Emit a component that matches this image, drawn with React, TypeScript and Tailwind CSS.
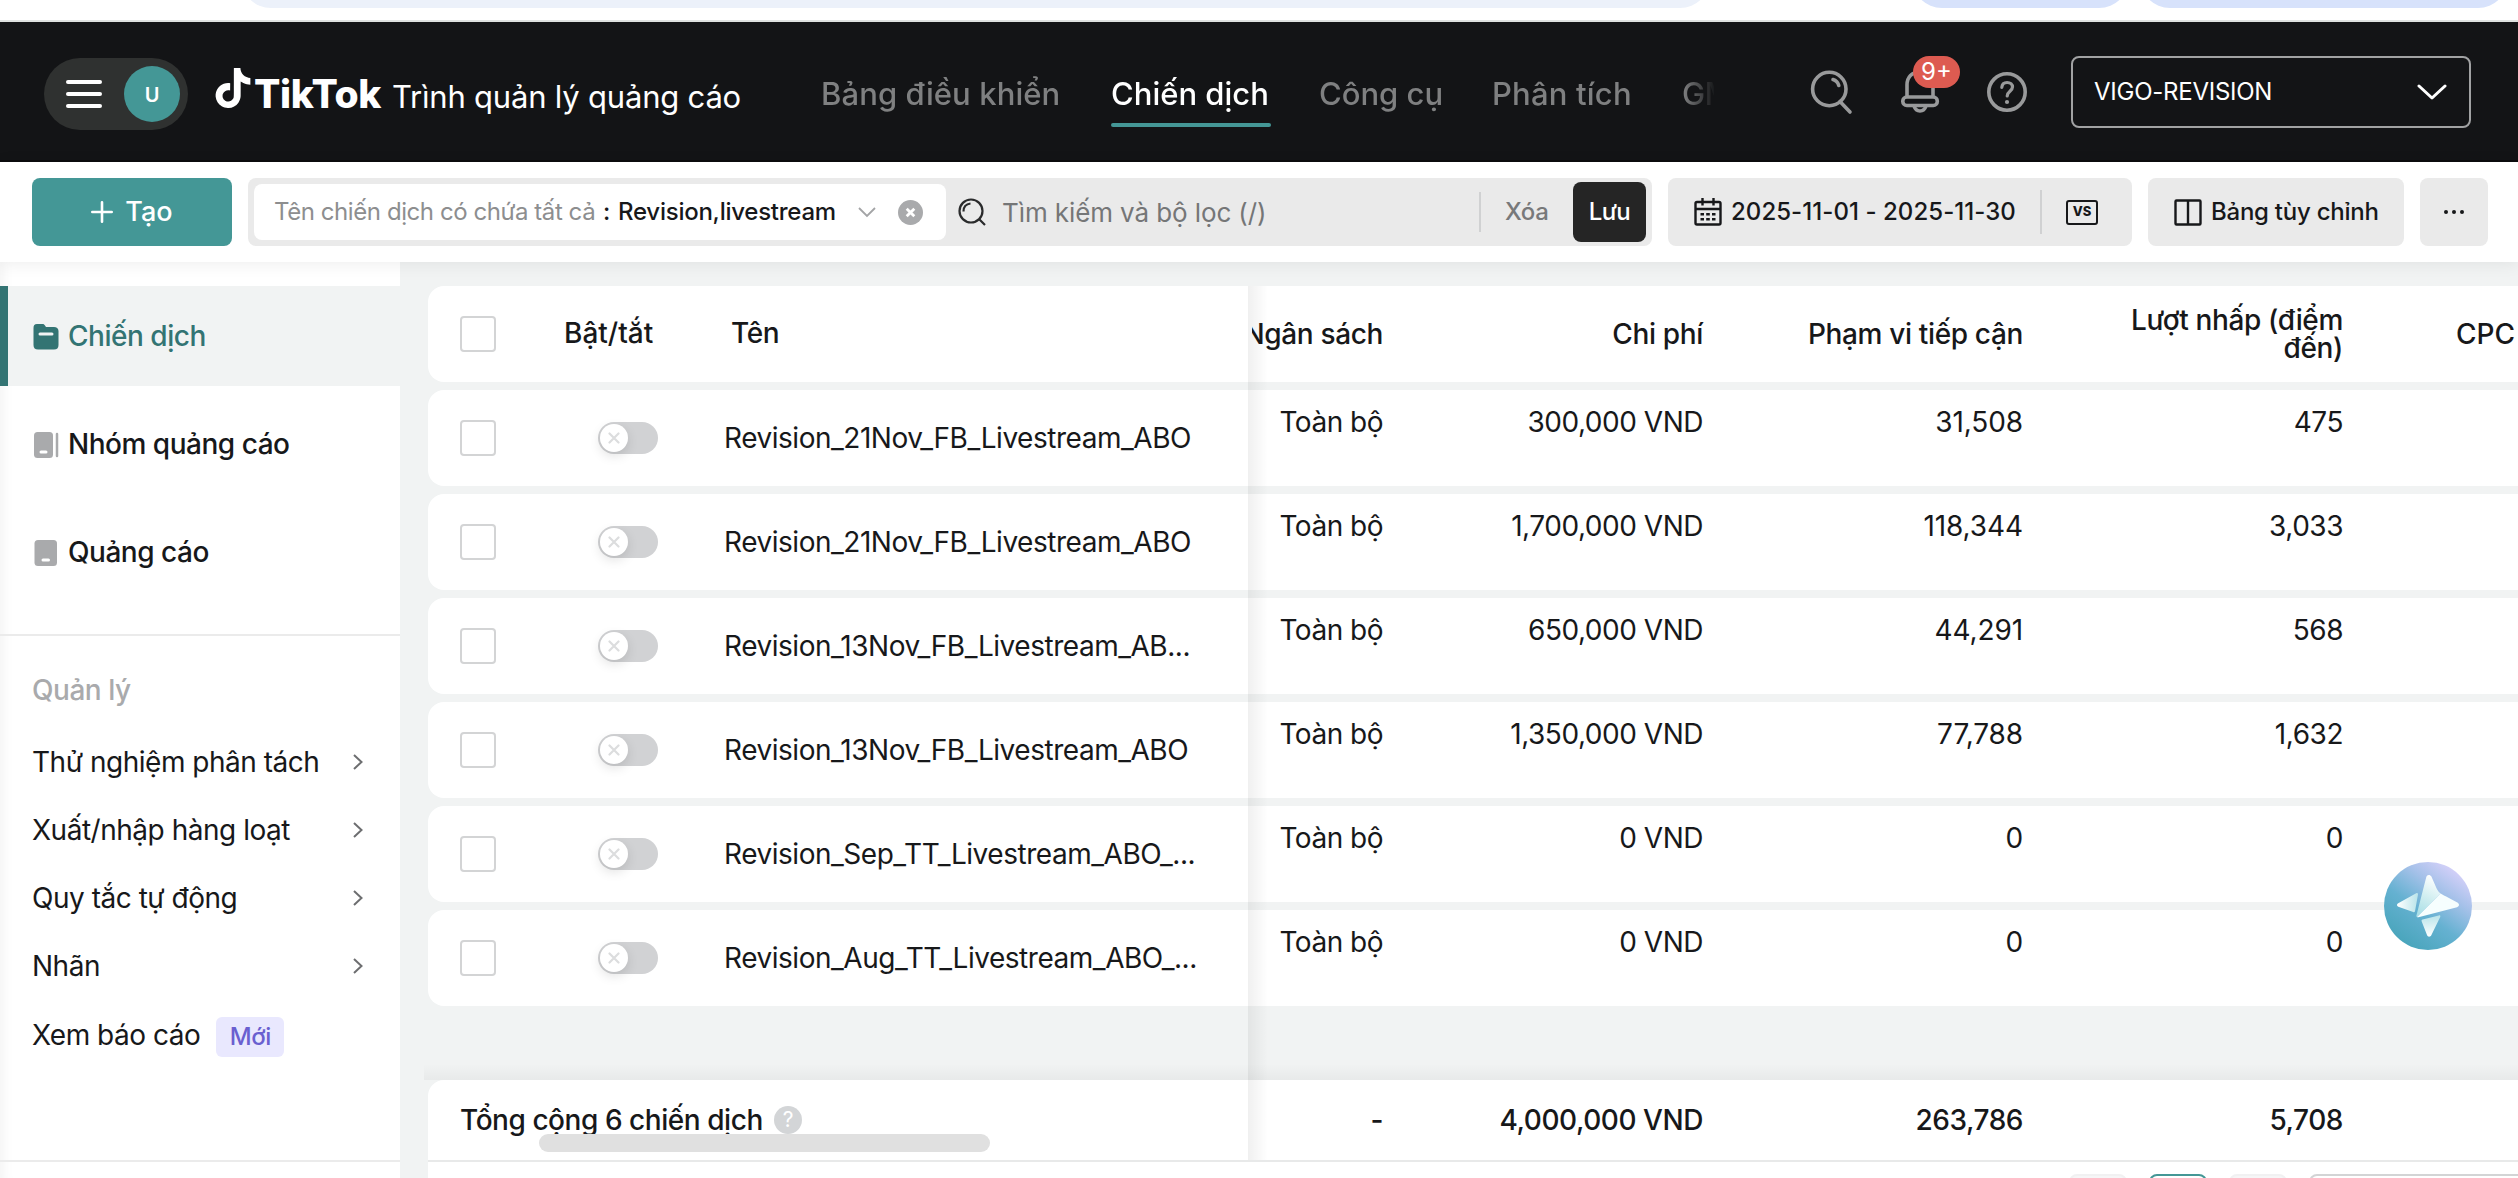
import type { ReactNode } from "react";
import { SiTiktok } from "react-icons/si";

const campaigns = [
  { name: "Revision_21Nov_FB_Livestream_ABO", cost: "300,000 VND", reach: "31,508", clicks: "475" },
  { name: "Revision_21Nov_FB_Livestream_ABO", cost: "1,700,000 VND", reach: "118,344", clicks: "3,033" },
  { name: "Revision_13Nov_FB_Livestream_AB...", cost: "650,000 VND", reach: "44,291", clicks: "568" },
  { name: "Revision_13Nov_FB_Livestream_ABO", cost: "1,350,000 VND", reach: "77,788", clicks: "1,632" },
  { name: "Revision_Sep_TT_Livestream_ABO_...", cost: "0 VND", reach: "0", clicks: "0" },
  { name: "Revision_Aug_TT_Livestream_ABO_...", cost: "0 VND", reach: "0", clicks: "0" },
];

const tools = ["Thử nghiệm phân tách", "Xuất/nhập hàng loạt", "Quy tắc tự động", "Nhãn"];

function BrowserEdge() {
  return (
    <div className="h-[22px] shrink-0 border-b-2 border-[#dfe2e0] bg-white">
      <div className="flex h-2 items-end overflow-hidden pl-[241px]">
        <div className="h-[60px] w-[1469px] shrink-0 rounded-full bg-[#ecf1fa]" />
        <div className="ml-[202px] h-[60px] w-[217px] shrink-0 rounded-full bg-[#d7e2fb]" />
        <div className="ml-[11px] h-[60px] w-[368px] shrink-0 rounded-full bg-[#d7e2fb]" />
      </div>
    </div>
  );
}

function Header() {
  return (
    <header className="flex h-[140px] shrink-0 items-center border-b-2 border-[#0c0c0e] bg-[#131416] pt-0.5 pl-11">
      <div className="mt-1 flex h-[72px] w-36 shrink-0 items-center justify-between rounded-full bg-[#2f3130] pr-2 pl-[22px]">
        <div className="flex flex-col gap-2">
          <span className="h-1 w-9 rounded-sm bg-white" />
          <span className="h-1 w-9 rounded-sm bg-white" />
          <span className="h-1 w-9 rounded-sm bg-white" />
        </div>
        <div className="flex size-14 items-center justify-center rounded-full bg-[#449796] pt-0.5 text-[20px] font-semibold text-white">U</div>
      </div>
      <SiTiktok className="-mt-2 ml-[25px] shrink-0 text-white" size={40} />
      <span className="mt-[3px] ml-[1px] w-[126px] shrink-0 text-[39px] leading-[48px] font-extrabold tracking-[-0.3px] whitespace-nowrap text-white">TikTok</span>
      <span className="mt-[9px] ml-[12px] w-[348px] shrink-0 text-[31px] leading-10 tracking-[-0.2px] whitespace-nowrap text-white">Trình quản lý quảng cáo</span>
      <nav className="ml-[81px] flex h-[136px] w-[893px] shrink-0 items-center gap-12 overflow-hidden pt-[3px] text-[31px] leading-10 font-[550] whitespace-nowrap text-[#7f8081] [mask-image:linear-gradient(to_right,#000_862px,transparent_895px)]">
        <span className="w-[242px] shrink-0 tracking-[0.1px]">Bảng điều khiển</span>
        <span className="relative w-40 shrink-0 text-white">
          Chiến dịch
          <span className="absolute inset-x-0 top-[49px] h-1 rounded-sm bg-[#449796]" />
        </span>
        <span className="w-[125px] shrink-0">Công cụ</span>
        <span className="w-[142px] shrink-0 tracking-[0.2px]">Phân tích</span>
        <span className="shrink-0 tracking-[-0.5px]">GMV Max</span>
      </nav>
      <svg className="ml-[95px] h-12 w-12 shrink-0" viewBox="0 0 48 48" fill="none" stroke="#999a9b" strokeWidth="3.6">
        <circle cx="20.3" cy="21" r="16.7" />
        <path d="M31 33.5 41 44" strokeLinecap="round" />
        <path d="M24 11.5c3 .9 5 3 5.8 6" strokeLinecap="round" />
      </svg>
      <div className="relative -mt-1.5 ml-[43px] shrink-0">
        <svg className="block h-[56px] w-[40px]" viewBox="0 0 40 56" fill="none" stroke="#999a9b" strokeWidth="3.6" strokeLinejoin="round">
          <path d="M7 36V24C7 16 12 11 19.700 11S33 16 33 24v12" />
          <rect x="2.800" y="36" width="34.500" height="8.500" rx="4" />
          <path d="M14 45c1 3 3 5 6 5s5-2 6-5" />
        </svg>
        <span className="absolute top-[-5px] left-[13px] flex h-8 w-[47px] items-center justify-center rounded-full bg-[#dd5b51] text-[24px] text-white">9+</span>
      </div>
      <svg className="ml-[47px] h-10 w-10 shrink-0" viewBox="0 0 40 40" fill="none" stroke="#999a9b" strokeWidth="3.6">
        <circle cx="20" cy="20" r="18.200" />
        <path d="M14.800 15.300c.3-3 2.300-4.800 5.300-4.800 3.200 0 5.400 1.900 5.400 4.600 0 4.100-5.300 4.300-5.300 8.900" strokeLinecap="round" strokeWidth="3.200" />
        <circle cx="20" cy="30" r="2.100" fill="#999a9b" stroke="none" />
      </svg>
      <div className="ml-[44px] flex h-[72px] w-[400px] shrink-0 items-center justify-between rounded-lg border-2 border-[#a1a2a3] pr-[22px] pl-[21px] text-[24px] tracking-[-0.25px] text-white">
        <span>VIGO-REVISION</span>
        <svg className="h-4 w-[30px]" viewBox="0 0 30 16" fill="none" stroke="#fff" strokeWidth="3" strokeLinecap="round" strokeLinejoin="round">
          <path d="m2 2 13 12L28 2" />
        </svg>
      </div>
    </header>
  );
}

function Toolbar() {
  return (
    <div className="relative z-10 flex h-[100px] shrink-0 items-center gap-4 bg-white pl-8 text-[24px] text-[#17181a] shadow-[0_2px_16px_rgba(0,0,0,0.07)]">
      <button className="flex h-[68px] w-[200px] items-center justify-center gap-3 rounded-lg bg-[#449796] text-[27px] font-medium text-white">
        <svg className="size-[22px]" viewBox="0 0 22 22" stroke="#fff" strokeWidth="2.600" strokeLinecap="round">
          <path d="M11 1.300v19.400M1.300 11h19.400" />
        </svg>
        Tạo
      </button>
      <div className="flex h-[68px] w-[1404px] shrink-0 items-center rounded-lg bg-[#eaeaea] pl-1.5 whitespace-nowrap">
        <div className="flex h-14 w-[692px] items-center rounded-lg bg-white pl-5">
          <span className="w-[329px] tracking-[-0.43px] text-[#8d8e8f]">Tên chiến dịch có chứa tất cả</span>
          <span className="w-[15px] font-medium">:</span>
          <span className="w-[240px] font-[550] tracking-[-0.25px]">Revision,livestream</span>
          <svg className="h-3 w-[18px]" viewBox="0 0 18 12" fill="none" stroke="#a3a4a6" strokeWidth="1.800">
            <path d="m1 2 8 8 8-8" />
          </svg>
          <svg className="ml-[22px] size-[25px]" viewBox="0 0 25 25">
            <circle cx="12.500" cy="12.500" r="12.500" fill="#a9aaac" />
            <path d="m8.700 8.700 7.600 7.600M16.300 8.700l-7.600 7.600" stroke="#fff" strokeWidth="2.800" />
          </svg>
        </div>
        <svg className="ml-[12px] size-7" viewBox="0 0 28 28" fill="none" stroke="#2a2b2c" strokeWidth="2.200">
          <circle cx="13" cy="13" r="11.500" />
          <path d="m21 21 6 6M5.500 13.500c0-4.500 2.500-7.500 7-8" />
        </svg>
        <span className="ml-[16px] w-[477px] text-[26px] tracking-[-0.1px] text-[#757677]">Tìm kiếm và bộ lọc (/)</span>
        <span className="h-10 w-0.5 bg-[#d0d1d2]" />
        <span className="ml-[24px] w-[68px] font-medium tracking-[-0.3px] text-[#78797a]">Xóa</span>
        <button className="flex h-[60px] w-[73px] items-center justify-center rounded-lg bg-[#252525] font-medium tracking-[-0.6px] text-white">Lưu</button>
      </div>
      <div className="flex h-[68px] w-[464px] shrink-0 items-center rounded-lg bg-[#eaeaea] pl-[26px] font-medium">
        <svg className="size-7" viewBox="0 0 28 28" fill="none" stroke="#17181a" strokeWidth="2.400">
          <rect x="1.500" y="4" width="25" height="22.500" rx="1.500" />
          <path d="M1.500 11h25M8.500 0v7.500M19.500 0v7.500" />
          <path d="M6.500 16.300h3.500M12.200 16.300h3.600M18 16.300h3.500M6.500 21.300h3.500M12.200 21.300h3.600M18 21.300h3.500" />
        </svg>
        <span className="ml-[9px] w-[309px] tracking-[0.05px] whitespace-nowrap">2025-11-01 - 2025-11-30</span>
        <span className="h-11 w-0.5 bg-[#d0d1d2]" />
        <span className="ml-[24px] flex h-[25px] w-8 items-center justify-center rounded-[3px] border-[2.500px] border-[#17181a] text-[13px] font-extrabold">VS</span>
      </div>
      <div className="flex h-[68px] w-64 shrink-0 items-center rounded-lg bg-[#eaeaea] pl-[26px] font-[550] tracking-[-0.25px]">
        <svg className="h-[27px] w-7" viewBox="0 0 28 27" fill="none" stroke="#17181a" strokeWidth="2.400">
          <rect x="1.500" y="1.500" width="25" height="24" rx="1" />
          <path d="M14 1.500v24" />
        </svg>
        <span className="ml-[9px] whitespace-nowrap">Bảng tùy chỉnh</span>
      </div>
      <div className="flex h-[68px] w-[68px] shrink-0 items-center justify-center gap-1 rounded-lg bg-[#eaeaea]">
        <span className="size-1 rounded-full bg-[#17181a]" />
        <span className="size-1 rounded-full bg-[#17181a]" />
        <span className="size-1 rounded-full bg-[#17181a]" />
      </div>
    </div>
  );
}

function LevelItem({ label, active, children }: { label: string; active?: boolean; children: ReactNode }) {
  return (
    <div className={active ? "flex h-[100px] items-center border-l-8 border-[#337473] bg-[#f1f3f3] pl-6 text-[#337473]" : "flex h-[100px] items-center border-l-8 border-transparent pl-6"}>
      <svg className="mt-0.5 h-7 w-7" viewBox="0 0 28 28">{children}</svg>
      <span className="ml-[8px] font-[550]">{label}</span>
    </div>
  );
}

function Sidebar() {
  return (
    <aside className="flex w-[400px] shrink-0 flex-col bg-white pt-6 text-[28px] leading-8 tracking-[-0.48px] text-[#17181a] shadow-[inset_14px_0_14px_-12px_rgba(0,0,0,0.06)]">
      <div className="flex flex-col gap-2 border-b-2 border-[#ebebeb] pb-8">
        <LevelItem label="Chiến dịch" active>
          <path fill="#337473" d="M5 1h5.500c1 0 1.700.5 2.300 1.300L14 4h8c2.500 0 4.500 1.500 4.500 4v14c0 3-1.500 4.500-4.500 4.500H6C3 26.500 1.500 25 1.500 22V5c0-2.500 1-4 3.500-4Z" />
          <path stroke="#f1f3f3" strokeWidth="3" strokeLinecap="round" d="M8 11h12" />
        </LevelItem>
        <LevelItem label="Nhóm quảng cáo">
          <rect x="2" y="1" width="19" height="26" rx="3.500" fill="#a9aaac" />
          <path stroke="#fff" strokeWidth="3" strokeLinecap="round" d="M9 21h5" />
          <path stroke="#a9aaac" strokeWidth="2.500" strokeLinecap="round" d="M25 3v22" />
        </LevelItem>
        <LevelItem label="Quảng cáo">
          <rect x="2.500" y="1" width="22.500" height="26" rx="3.500" fill="#a9aaac" />
          <path stroke="#fff" strokeWidth="3" strokeLinecap="round" d="M11 21h5.500" />
        </LevelItem>
      </div>
      <div className="flex h-[526px] flex-col border-b-2 border-[#ebebeb] pt-[38px] pl-8">
        <div className="mb-[22px] font-medium text-[#a9aaac]">Quản lý</div>
        {tools.map((tool) => (
          <div key={tool} className="flex h-[68px] items-center justify-between pr-9">
            <span className="whitespace-nowrap">{tool}</span>
            <svg className="h-[18px] w-3" viewBox="0 0 12 18" fill="none" stroke="#6d6e70" strokeWidth="2">
              <path d="m2 2 7.500 7L2 16" />
            </svg>
          </div>
        ))}
        <div className="flex h-[72px] items-center pb-0.5">
          <span>Xem báo cáo</span>
          <span className="mt-1 ml-4 flex h-10 w-[68px] items-center justify-center rounded-md bg-[#e9e8fe] text-[24px] font-[550] text-[#6a5fd0]">Mới</span>
        </div>
      </div>
    </aside>
  );
}

function Checkbox() {
  return <span className="block size-9 shrink-0 rounded border-2 border-[#d3d4d5] bg-white" />;
}

function Toggle() {
  return (
    <span className="flex h-8 w-[60px] shrink-0 items-center rounded-full bg-[#d1d2d4] pl-0.5">
      <span className="flex size-7 items-center justify-center rounded-full bg-white shadow-[0_4px_12px_rgba(0,0,0,0.12)]">
        <svg className="size-3" viewBox="0 0 12 12" stroke="#dcddde" strokeWidth="2.200" strokeLinecap="round">
          <path d="m1.500 1.500 9 9M10.500 1.500l-9 9" />
        </svg>
      </span>
    </span>
  );
}

function Main() {
  return (
    <main className="relative flex flex-1 flex-col overflow-hidden bg-[#f1f3f3] pt-6 pl-7 text-[28px] leading-7 tracking-[-0.47px] text-[#17181a]">
      <div className="flex flex-col gap-2">
        <div className="flex h-24 items-center rounded-l-2xl bg-white font-[550] tracking-[-0.35px] whitespace-nowrap">
          <div className="flex w-[824px] shrink-0 items-center pl-8">
            <Checkbox />
            <span className="-mt-0.5 ml-[68px] w-[167px] tracking-[0px]">Bật/tắt</span>
            <span className="-mt-0.5">Tên</span>
          </div>
          <div className="flex w-[151px] shrink-0 justify-end overflow-hidden py-2 pr-5">Ngân sách</div>
          <div className="w-80 shrink-0 pr-5 text-right">Chi phí</div>
          <div className="w-80 shrink-0 pr-5 text-right">Phạm vi tiếp cận</div>
          <div className="w-80 shrink-0 pr-5 text-right">Lượt nhấp (điểm<br />đến)</div>
          <div className="pl-[93px] tracking-[0px]">CPC</div>
        </div>
        {campaigns.map((c, i) => (
          <div key={i} className="flex h-24 rounded-l-2xl bg-white whitespace-nowrap">
            <div className="flex w-[820px] shrink-0 items-center pl-8">
              <Checkbox />
              <span className="ml-[102px]"><Toggle /></span>
              <span className="-mt-px ml-[66px]">{c.name}</span>
            </div>
            <div className="w-[155px] pt-[18px] pr-5 text-right tracking-[-0.5px]">Toàn bộ</div>
            <div className="w-80 pt-[18px] pr-5 text-right">{c.cost}</div>
            <div className="w-80 pt-[18px] pr-5 text-right tracking-[-0.1px]">{c.reach}</div>
            <div className="w-80 pt-[18px] pr-5 text-right">{c.clicks}</div>
          </div>
        ))}
      </div>
      <div className="mt-[58px] -ml-1 h-4 shrink-0 bg-gradient-to-b from-transparent to-black/4" />
      <div className="flex h-[82px] shrink-0 items-center rounded-tl-2xl border-b-2 border-[#e8e9e9] bg-white font-[550] tracking-[-0.45px] whitespace-nowrap">
        <div className="relative flex w-[820px] shrink-0 items-center pl-8">
          <span>Tổng cộng 6 chiến dịch</span>
          <span className="ml-[11px] flex size-7 items-center justify-center rounded-full bg-[#d3d5d7] text-[21px] font-normal text-white">?</span>
          <span className="absolute top-[28px] left-[111px] h-[18px] w-[451px] rounded-full bg-[#e0e0e0]" />
        </div>
        <div className="w-[155px] pr-5 text-right">-</div>
        <div className="w-80 pr-5 text-right">4,000,000 VND</div>
        <div className="w-80 pr-5 text-right">263,786</div>
        <div className="w-80 pr-5 text-right">5,708</div>
      </div>
      <div className="flex flex-1 items-start gap-[22px] overflow-hidden bg-white pt-3 pl-[1641px]">
        <span className="h-14 w-[58px] shrink-0 rounded-lg border-2 border-[#f1f1f2] bg-[#f6f6f7]" />
        <span className="h-14 w-[58px] shrink-0 rounded-lg border-2 border-[#449796]" />
        <span className="h-14 w-[58px] shrink-0 rounded-lg border-2 border-[#f1f1f2] bg-[#f6f6f7]" />
        <span className="h-14 w-[280px] shrink-0 rounded-lg border-2 border-[#d3d4d5]" />
      </div>
      <div className="pointer-events-none absolute top-6 left-[848px] h-[874px] w-5 bg-gradient-to-r from-black/6 to-transparent" />
      <svg className="absolute top-[600px] right-[46px] size-[88px]" viewBox="0 0 88 88">
        <defs>
          <linearGradient id="orb" x1="0.200" y1="0.950" x2="0.850" y2="0.050">
            <stop offset="0" stopColor="#47a4ba" />
            <stop offset="0.400" stopColor="#65b1d1" />
            <stop offset="0.700" stopColor="#a5c1e9" />
            <stop offset="1" stopColor="#ddd3fc" />
          </linearGradient>
          <linearGradient id="wing" x1="0.600" y1="0" x2="0.300" y2="1">
            <stop offset="0" stopColor="#fff" />
            <stop offset="0.500" stopColor="#d3eff1" />
            <stop offset="1" stopColor="#a9dfe6" />
          </linearGradient>
          <linearGradient id="tailLeft" x1="0" y1="0" x2="1" y2="0">
            <stop offset="0" stopColor="#fff" />
            <stop offset="1" stopColor="#b9e4ea" />
          </linearGradient>
          <linearGradient id="tailDown" x1="0" y1="1" x2="0" y2="0">
            <stop offset="0" stopColor="#fff" />
            <stop offset="1" stopColor="#b9e4ea" />
          </linearGradient>
        </defs>
        <circle cx="44" cy="44" r="44" fill="url(#orb)" />
        <path fill="url(#wing)" d="M42.300 15c.6-2.700 4-2.800 5.100-.4l5 11.400c1.200 2.700 2.400 4.300 4.300 5.500L33 55c-.7-.2-.7-1-.5-1.800Z" />
        <path fill="#f6fefe" d="M56.700 31.500c1.400 1.200 3.500 2.100 5 2.800L73.300 40.500c2.400 1.200 2.200 4-.3 4.700L34.500 55.200c-.8.2-1.500 0-1.500-.3Z" />
        <path fill="url(#tailLeft)" d="M14.200 41.200 32.200 31.300c1-.6 2 .1 1.800 1.200L31 49.200c-.2 1-.9 1.300-1.800.9L14.300 44.700c-1.700-.7-1.700-2.600-.1-3.500Z" />
        <path fill="url(#tailDown)" d="m38.600 57.400 16.200-4c1.200-.3 1.900.4 1.400 1.500l-8.900 18.400c-1.100 2-3.500 1.900-4.300-.2l-5.300-13.600c-.4-1.100-.1-1.800.9-2.100Z" />
      </svg>
    </main>
  );
}

export default function App() {
  return (
    <div className="flex h-[1178px] w-[2518px] flex-col overflow-hidden bg-white font-['Inter','Liberation_Sans',sans-serif]">
      <BrowserEdge />
      <Header />
      <Toolbar />
      <div className="flex min-h-0 flex-1">
        <Sidebar />
        <Main />
      </div>
    </div>
  );
}
